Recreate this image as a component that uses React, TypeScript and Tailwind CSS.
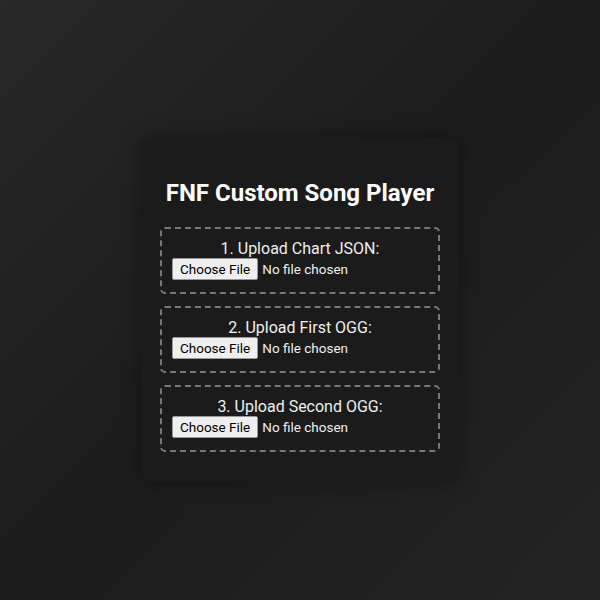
const steps = ['1. Upload Chart JSON:', '2. Upload First OGG:', '3. Upload Second OGG:'];

export default function App() {
  return (
    <div
      className="min-h-screen flex items-center justify-center bg-[linear-gradient(135deg,#282828_0%,#1c1c1c_50%,#242424_100%)] pt-[20px]"
      style={{ fontFamily: 'Roboto, "Noto Sans", sans-serif' }}
    >
      <div className="w-[318px] rounded-lg bg-[#1b1b1b] px-[19px] pt-[41px] pb-[30px] shadow-[0_0_20px_rgba(0,0,0,0.35)]">
        <h1 className="text-center text-[24px] font-bold leading-[28px] text-white mb-[20px]">
          FNF Custom Song Player
        </h1>
        <div className="flex flex-col gap-[12px]">
          {steps.map((label) => (
            <div
              key={label}
              className="rounded-[5px] border-2 border-dashed border-[#777] px-[10px] pt-[10px] pb-[12px] text-center text-[#eee]"
            >
              <label className="block text-[16px] leading-[19px]">{label}</label>
              <input
                type="file"
                className="block w-full text-left text-[13.5px] leading-[16px] text-[#eee] file:mr-[4px] file:rounded-[2px] file:border file:border-[#999] file:bg-[#efefef] file:px-[7px] file:py-[2px] file:text-[13.5px] file:text-black"
              />
            </div>
          ))}
        </div>
      </div>
    </div>
  );
}
